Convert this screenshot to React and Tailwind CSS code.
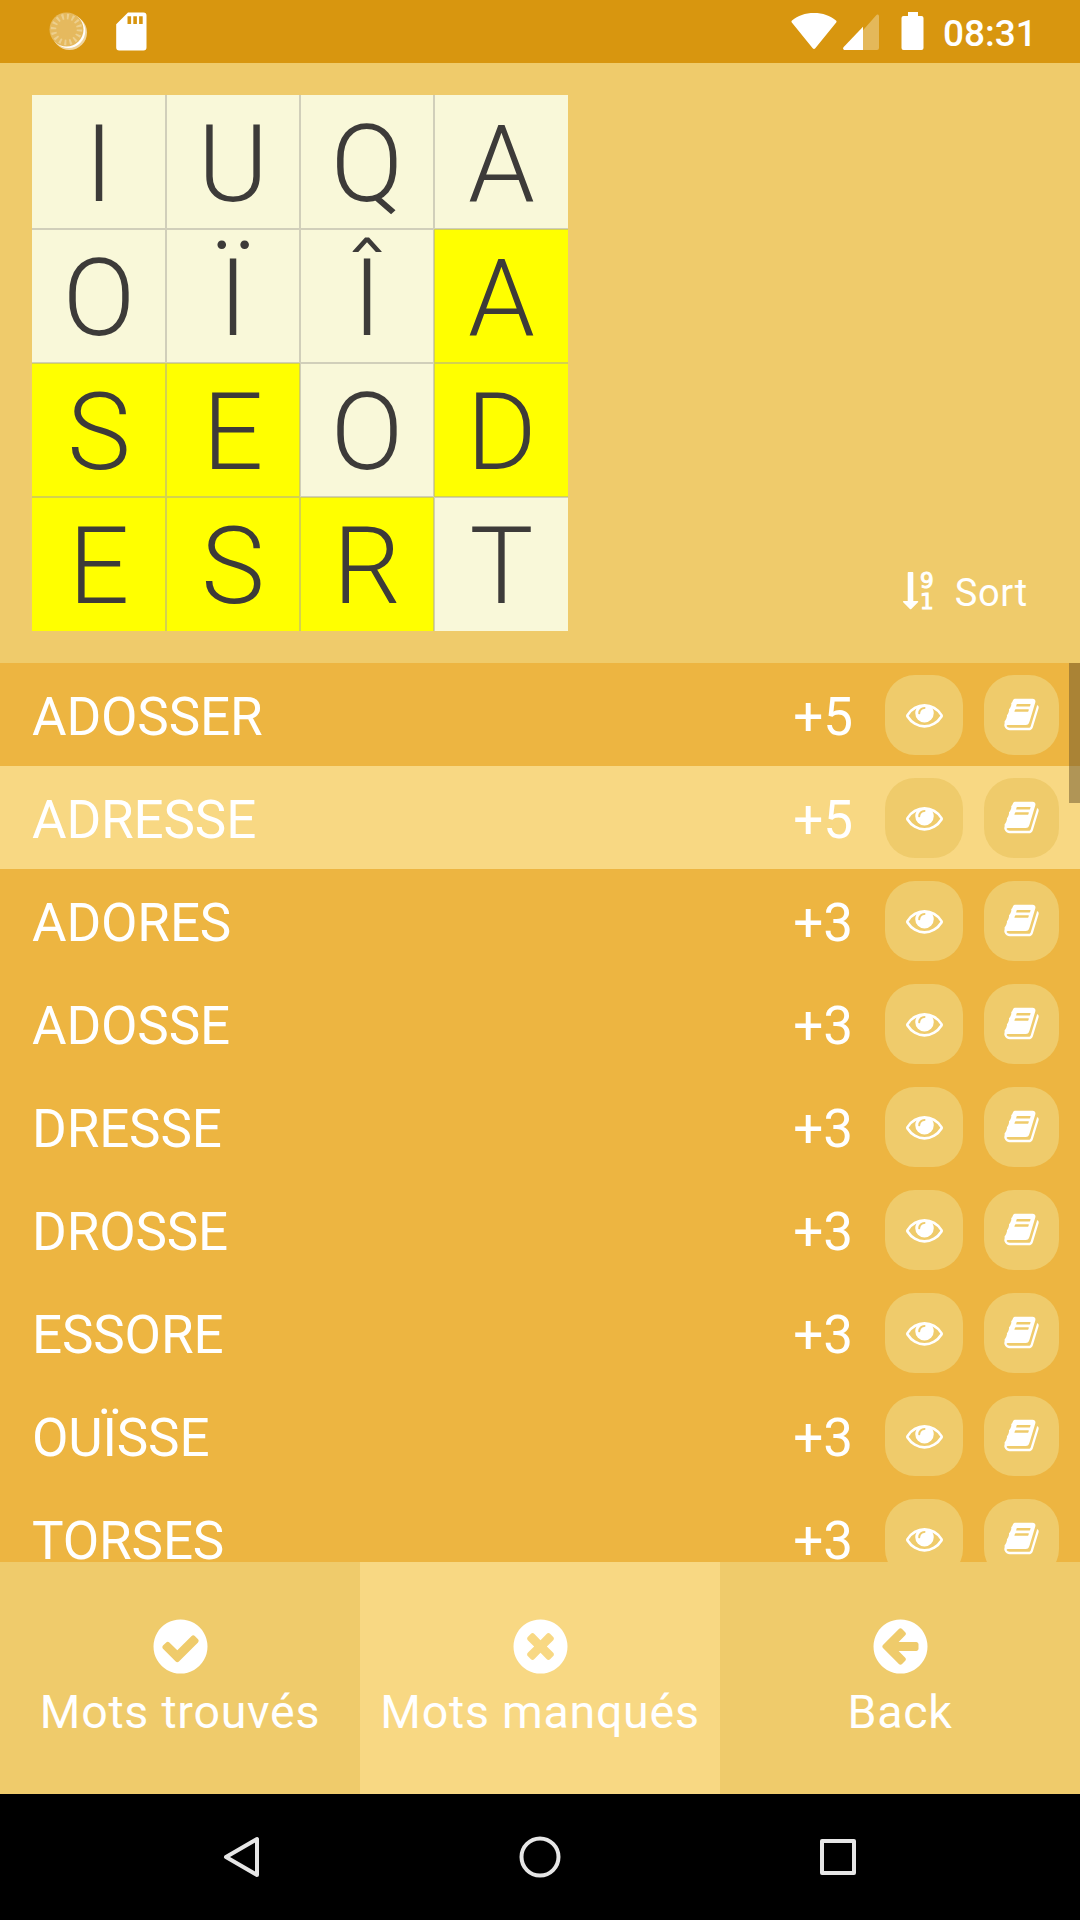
import React from "react";

const disc =
  "M1664 896q0 209-103 385.5t-279.5 279.5-385.5 103-385.5-103-279.5-279.5-103-385.5 103-385.5 279.5-279.5 385.5-103 385.5 103 279.5 279.5 103 385.5z";

const icons = {
  eye: "M1664 960q-152-236-381-353 61 104 61 225 0 185-131.5 316.5t-316.5 131.5-316.5-131.5-131.5-316.5q0-121 61-225-229 117-381 353 133 205 333.5 326.5t434.5 121.5 434.5-121.5 333.5-326.5zm-720-384q0-20-14-34t-34-14q-125 0-214.5 89.5t-89.5 214.5q0 20 14 34t34 14 34-14 14-34q0-86 61-147t147-61q20 0 34-14t14-34zm848 384q0 34-20 69-140 230-376.5 368.5t-499.5 138.5-499.5-139-376.5-368q-20-35-20-69t20-69q140-229 376.5-368t499.5-139 499.5 139 376.5 368q20 35 20 69z",
  book: "M1703 478q40 57 18 129l-275 906q-19 64-76.5 107.5t-122.5 43.5h-923q-77 0-148.5-53.5t-99.5-131.5q-24-67-2-127 0-4 3-27t4-37q1-8-3-21.5t-3-19.5q2-11 8-21t16.5-23.5 16.5-23.5q23-38 45-91.5t30-91.5q3-10 .5-30t-.5-28q3-11 17-28t17-23q21-36 42-92t25-90q1-9-2.5-32t.5-28q4-13 22-30.5t22-22.5q19-26 42.5-84.5t27.5-96.5q1-8-3-25.5t-2-26.5q2-8 9-18t18-23 17-21q8-12 16.5-30.5t15-35 16-36 19.5-32 26.5-23.5 36-11.5 47.5 5.5l-1 3q38-9 51-9h761q74 0 114 56t18 130l-274 906q-36 119-71.5 153.5t-128.5 34.5h-869q-27 0-38 15-11 16-1 43 24 70 144 70h923q29 0 56-15.5t35-41.5l300-987q7-22 5-57 38 15 59 43zm-1064 2q-4 13 2 22.5t20 9.5h608q13 0 25.5-9.5t16.5-22.5l21-64q4-13-2-22.5t-20-9.5h-608q-13 0-25.5 9.5t-16.5 22.5zm-83 256q-4 13 2 22.5t20 9.5h608q13 0 25.5-9.5t16.5-22.5l21-64q4-13-2-22.5t-20-9.5h-608q-13 0-25.5 9.5t-16.5 22.5z",
  check:
    "M1412 734q0-28-18-46l-91-90q-19-19-45-19t-45 19l-408 407-226-226q-19-19-45-19t-45 19l-91 90q-18 18-18 46 0 27 18 45l362 362q19 19 45 19 27 0 46-19l543-543q18-18 18-45z" + disc,
  times:
    "M1277 1122q0-26-19-45l-181-181 181-181q19-19 19-45 0-27-19-46l-90-90q-19-19-46-19-26 0-45 19l-181 181-181-181q-19-19-45-19-27 0-46 19l-90 90q-19 19-19 46 0 26 19 45l181 181-181 181q-19 19-19 45 0 27 19 46l90 90q19 19 46 19 26 0 45-19l181-181 181 181q19 19 45 19 27 0 46-19l90-90q19-19 19-46z" + disc,
  back:
    "M1408 960v-128q0-26-19-45t-45-19h-502l189-189q19-19 19-45t-19-45l-91-91q-18-18-45-18t-45 18l-362 362-91 91q-18 18-18 45t18 45l91 91 362 362q18 18 45 18t45-18l91-91q18-18 18-45t-18-45l-189-189h502q26 0 45-19t19-45z" + disc,
};

function Icon({ name, className }) {
  return (
    <svg viewBox="0 0 1792 1792" className={className} fill="currentColor" fillRule="evenodd">
      <path d={icons[name]} />
    </svg>
  );
}

const board = [
  ["I", 0], ["U", 0], ["Q", 0], ["A", 0],
  ["O", 0], ["Ï", 0], ["Î", 0], ["A", 1],
  ["S", 1], ["E", 1], ["O", 0], ["D", 1],
  ["E", 1], ["S", 1], ["R", 1], ["T", 0],
];

const words = [
  ["ADOSSER", 5], ["ADRESSE", 5], ["ADORES", 3], ["ADOSSE", 3], ["DRESSE", 3],
  ["DROSSE", 3], ["ESSORE", 3], ["OUÏSSE", 3], ["TORSES", 3],
];

const tabs = [
  ["check", "Mots trouvés"],
  ["times", "Mots manqués"],
  ["back", "Back"],
];

function StatusBar() {
  return (
    <header className="flex h-[63px] shrink-0 items-start bg-[#d8960f]">
      <svg className="ml-[49px] mt-3 h-[39px] w-[39px]" viewBox="0 0 39 39">
        <circle cx="20.5" cy="20.5" r="17.5" fill="#fff" opacity="0.6" />
        <circle cx="19.3" cy="19" r="17" fill="#fff" />
        <circle cx="17.5" cy="17.5" r="17" fill="#e5b95e" />
        <circle cx="17.5" cy="17.5" r="13" fill="none" stroke="#edcf8d" strokeWidth="5.5" strokeDasharray="2 3.106" />
      </svg>
      <svg className="ml-[28px] mt-3 h-[39px] w-[31px]" viewBox="0 0 31 39" fill="#fff">
        <path fillRule="evenodd" d="M12 .5H27.500a3 3 0 0 1 3 3V35.500a3 3 0 0 1-3 3H3.200a3 3 0 0 1-3-3V12.300zM11.500 4.300V12h3.600V4.300zM17.300 4.300V12h3.600V4.300zM23.100 4.300V12h3.600V4.300z" />
      </svg>
      <svg className="ml-auto mt-3 h-[39px] w-[46px]" viewBox="0 0 46 39" fill="#fff">
        <path d="M1 8.500C7 3.500 14 1 23 1s16 2.500 22 7.500c.7.600.7 1.200.2 1.900L24.300 36.300c-.8 1-1.800 1-2.600 0L.8 10.400C.3 9.700.3 9.100 1 8.500z" />
      </svg>
      <svg className="ml-[6px] mt-[14px] h-9 w-9" viewBox="0 0 36 36">
        <path d="M20 16.300L33.200 1.200C34.200 0 36 .5 36 2.200V34a2 2 0 0 1-2 2H20z" fill="#e4b85a" />
        <path d="M20 12.800V36H2C0 36-.5 34.300.7 33z" fill="#fff" />
      </svg>
      <svg className="ml-[22px] mt-3 h-[38px] w-[23px]" viewBox="0 0 23 38" fill="#fff">
        <path d="M7 0h10v4h3.500a2 2 0 0 1 2 2v30a2 2 0 0 1-2 2h-18a2 2 0 0 1-2-2V6a2 2 0 0 1 2-2H7z" />
      </svg>
      <span className="ml-[19px] mr-[45px] mt-[11px] w-[92px] whitespace-nowrap text-[37px] leading-[45px] font-medium">08:31</span>
    </header>
  );
}

function Board() {
  return (
    <div className="grid h-[536px] w-[536px] grid-cols-4 grid-rows-4">
      {board.map(([letter, lit], i) => (
        <div
          key={i}
          className={
            "flex items-center justify-center border-[#aaa59b]/50 text-[107px] leading-none font-light text-[#3d3b39] " +
            (lit ? "bg-[#ffff00] " : "bg-[#f9f8d9] ") +
            (i % 4 < 3 ? "border-r " : "") +
            (i % 4 > 0 ? "border-l " : "pl-px ") +
            (i < 12 ? "border-b " : "") +
            (i > 3 ? "border-t pt-[4px]" : "pt-[6px]")
          }
        >
          {letter}
        </div>
      ))}
    </div>
  );
}

function SortButton() {
  return (
    <button className="mb-[13px] mr-[52px] flex items-center tracking-[0.7px]">
      <svg className="mb-1 mr-[20px] h-[40px] w-[32px] overflow-visible" viewBox="0 0 32 40" fill="#fff">
        <path d="M5.500 1h4a.8.800 0 0 1 .8.800V30h4.200c.8 0 1 .8.500 1.300l-6.700 6.700a1 1 0 0 1-1.400 0L.200 31.300C-.3 30.800 0 30 .7 30h4V1.800A.8.800 0 0 1 5.500 1z" />
        <g fontFamily="DejaVu Sans" fontSize="21.5" letterSpacing="0" stroke="#fff" strokeWidth="1">
          <text x="17" y="16.800">9</text>
          <text x="17" y="38.300">1</text>
        </g>
      </svg>
      <span className="text-[38px] leading-[50px]">Sort</span>
    </button>
  );
}

function WordRow({ word, points, selected }) {
  return (
    <li className={"flex h-[103px] shrink-0 items-center pl-8 pr-[21px] " + (selected ? "bg-[#f8d883]" : "bg-[#edb541]")}>
      <span className="flex-1 pt-[4px] text-[53px] leading-[62px] tracking-[-0.15px]">{word}</span>
      <span className="mr-8 pt-[4px] text-[53px] leading-[62px]">+{points}</span>
      <button className="mr-[21px] flex h-20 w-[78px] items-center justify-center rounded-[30px] bg-[#efcb6b]">
        <Icon name="eye" className="h-[37px] w-[37px]" />
      </button>
      <button className="flex h-20 w-[75px] items-center justify-center rounded-[30px] bg-[#efcb6b]">
        <Icon name="book" className="h-[37px] w-[37px]" />
      </button>
    </li>
  );
}

export default function App() {
  return (
    <div className="flex h-[1920px] w-[1080px] flex-col overflow-hidden bg-[#efcb6b] font-['Roboto',sans-serif] text-white">
      <StatusBar />
      <section className="flex h-[600px] shrink-0 items-end justify-between p-8 pr-0">
        <Board />
        <SortButton />
      </section>
      <main className="relative h-[899px] shrink-0 overflow-hidden bg-[#edb541]">
        <ul className="flex flex-col">
          {words.map(([word, points], i) => (
            <WordRow key={word} word={word} points={points} selected={i === 1} />
          ))}
        </ul>
        <div className="absolute right-0 top-0 h-[140px] w-[11px] bg-[#67522a]/50" />
      </main>
      <nav className="grid h-[232px] shrink-0 grid-cols-3">
        {tabs.map(([icon, label], i) => (
          <button
            key={icon}
            className={"flex flex-col items-center pt-[53px] " + (i === 1 ? "bg-[#f8d883]" : "")}
          >
            <Icon name={icon} className="h-[63px] w-[63px]" />
            <span className="mt-[7px] text-[46.500px] leading-[54px] tracking-[0.750px]">{label}</span>
          </button>
        ))}
      </nav>
      <footer className="flex flex-1 items-center justify-center bg-black">
        <svg className="h-[44px] w-[636px]" viewBox="0 0 636 44" fill="none" stroke="#e6e6e6" strokeWidth="4" strokeLinejoin="round">
          <path d="M35 4V40L4 22z" />
          <circle cx="318" cy="22" r="18.500" />
          <rect x="600" y="6" width="32" height="32" />
        </svg>
      </footer>
    </div>
  );
}
